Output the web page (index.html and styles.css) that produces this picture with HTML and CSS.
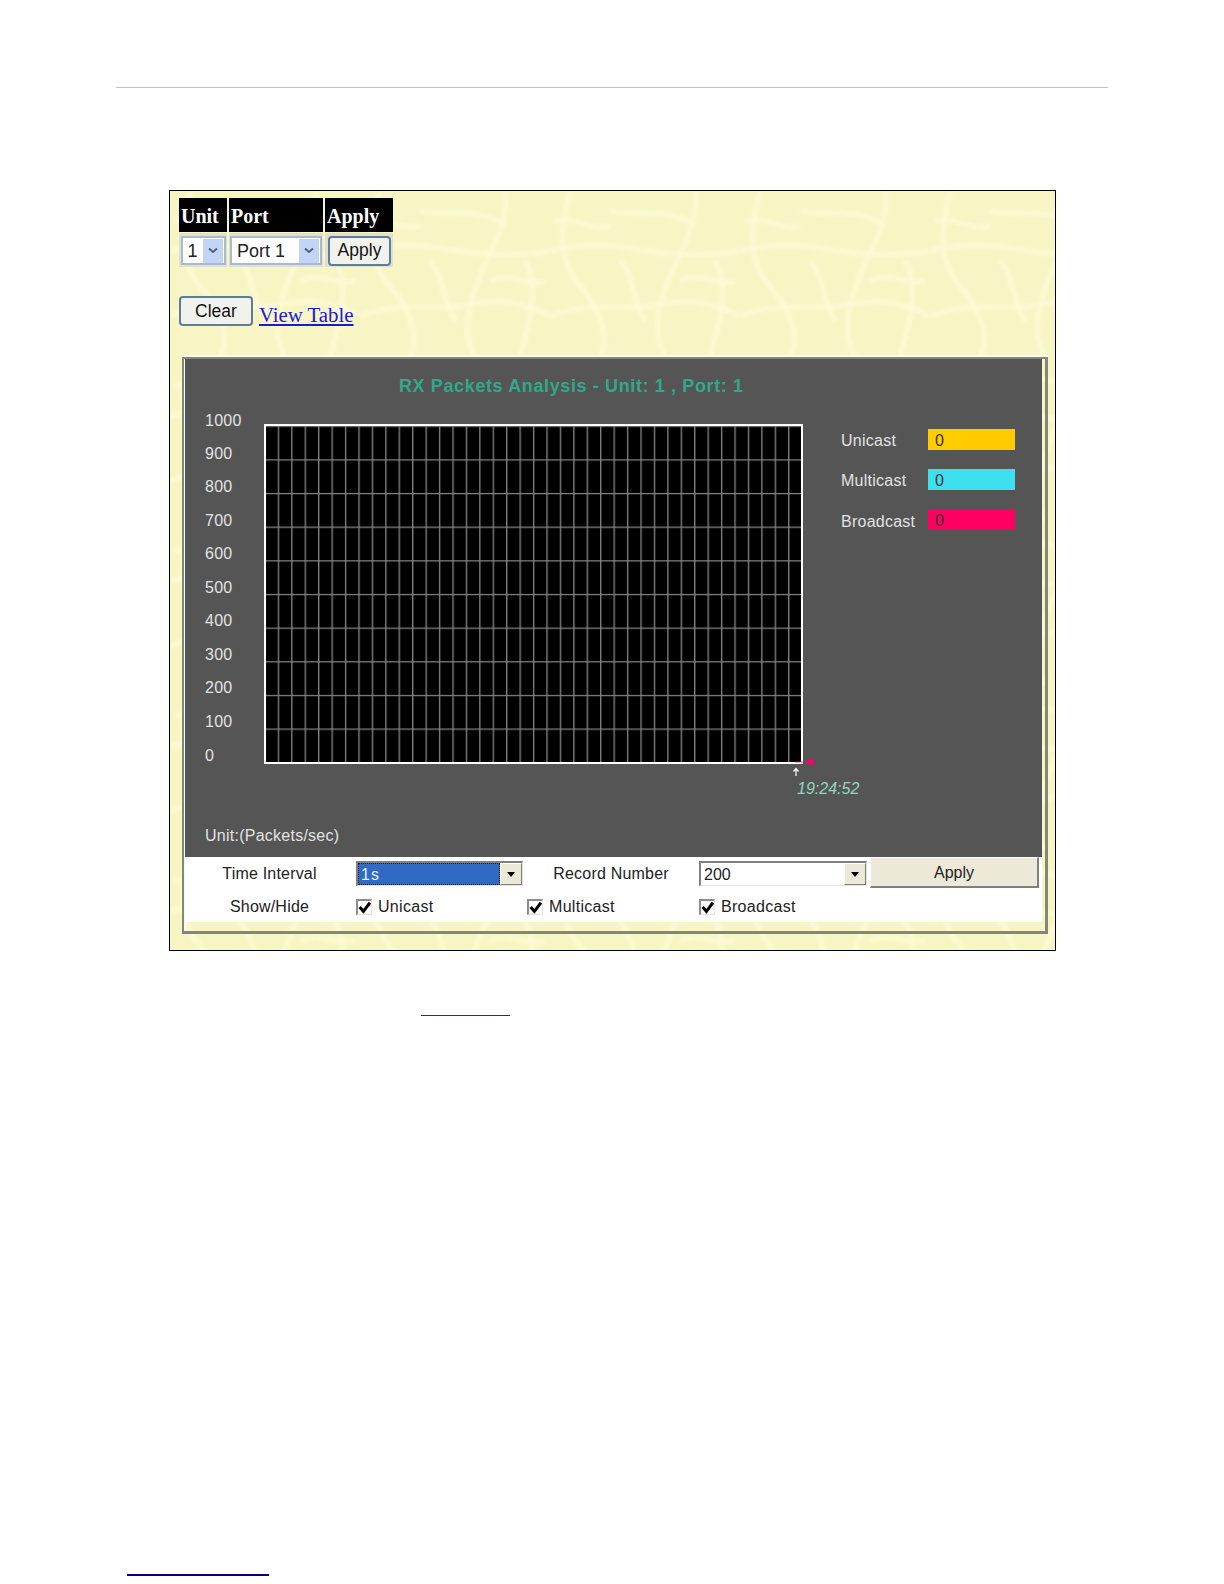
FILE: index.html
```html
<!DOCTYPE html>
<html lang="en">

<head>
    <meta charset="UTF-8">
    <title>RX Packets Analysis</title>
    <link rel="stylesheet" href="styles.css">
</head>

<body>
    <div class="rule"></div>

    <div class="frame">
        <div class="picker">
            <div class="picker__head">Unit</div>
            <div class="picker__head">Port</div>
            <div class="picker__head">Apply</div>
            <div class="picker__cell">
                <div class="pick pick--unit">
                    <span class="pick__value">1</span>
                    <span class="pick__arrow">
                        <svg width="10" height="7" viewBox="0 0 10 7"><path d="M1 1.5 L5 5 L9 1.5" fill="none" stroke="#4d5f85" stroke-width="2"/></svg>
                    </span>
                </div>
            </div>
            <div class="picker__cell">
                <div class="pick pick--port">
                    <span class="pick__value">Port 1</span>
                    <span class="pick__arrow">
                        <svg width="10" height="7" viewBox="0 0 10 7"><path d="M1 1.5 L5 5 L9 1.5" fill="none" stroke="#4d5f85" stroke-width="2"/></svg>
                    </span>
                </div>
            </div>
            <div class="picker__cell picker__cell--btn">
                <button class="btn btn--apply" type="button">Apply</button>
            </div>
        </div>

        <div class="actions">
            <button class="btn btn--clear" type="button">Clear</button>
            <a class="view-link" href="#">View Table</a>
        </div>

        <div class="panel">
            <svg class="chart" width="857" height="498" viewBox="185 359 857 498">
                <defs>
                    <pattern id="grid" patternUnits="userSpaceOnUse" x="264.3" y="459.3" width="13.43" height="33.65">
                        <path d="M0 0.7 H13.43 M0.7 0 V33.65" fill="none" stroke="#858585" stroke-width="1.3"/>
                    </pattern>
                </defs>

                <text class="chart__title" x="399" y="392" textLength="344">RX Packets Analysis - Unit: 1 , Port: 1</text>

                <text class="chart__label" x="205" y="426">1000</text>
                <text class="chart__label" x="205" y="459">900</text>
                <text class="chart__label" x="205" y="492">800</text>
                <text class="chart__label" x="205" y="526">700</text>
                <text class="chart__label" x="205" y="559">600</text>
                <text class="chart__label" x="205" y="593">500</text>
                <text class="chart__label" x="205" y="626">400</text>
                <text class="chart__label" x="205" y="660">300</text>
                <text class="chart__label" x="205" y="693">200</text>
                <text class="chart__label" x="205" y="727">100</text>
                <text class="chart__label" x="205" y="761">0</text>

                <rect x="265" y="425" width="537" height="338" fill="#000"/>
                <rect x="265" y="425" width="537" height="338" fill="url(#grid)"/>
                <rect x="265" y="425" width="537" height="338" fill="none" stroke="#fff" stroke-width="2"/>

                <path d="M795 762 H804" stroke="#ff0066" stroke-width="1" stroke-opacity="0.7"/>
                <path d="M803 762 L814 758.5 V765.5 Z" fill="#ff0066"/>
                <path d="M796 776 V769 M793.5 771.5 L796 768.5 L798.5 771.5" fill="none" stroke="#fff" stroke-width="1.2"/>
                <text class="chart__time" x="797" y="794">19:24:52</text>

                <text class="chart__label" x="841" y="446">Unicast</text>
                <rect x="928" y="429" width="87" height="21" fill="#ffcc00"/>
                <text class="chart__count" x="935" y="446">0</text>

                <text class="chart__label" x="841" y="486">Multicast</text>
                <rect x="928" y="469" width="87" height="21" fill="#3ce0ee"/>
                <text class="chart__count" x="935" y="486">0</text>

                <text class="chart__label" x="841" y="527">Broadcast</text>
                <rect x="928" y="509" width="87" height="20" fill="#ff0060"/>
                <text class="chart__count" x="935" y="526">0</text>

                <text class="chart__label" x="205" y="841">Unit:(Packets/sec)</text>
            </svg>

            <div class="controls">
                <div class="controls__row controls__row--top">
                    <div class="controls__label">Time Interval</div>
                    <div class="drop drop--time">
                        <span class="drop__value drop__value--picked">1s</span>
                        <span class="drop__arrow"></span>
                    </div>
                    <div class="controls__label controls__label--mid">Record Number</div>
                    <div class="drop drop--record">
                        <span class="drop__value">200</span>
                        <span class="drop__arrow"></span>
                    </div>
                    <button class="flat-btn" type="button">Apply</button>
                </div>
                <div class="controls__row controls__row--checks">
                    <div class="controls__label">Show/Hide</div>
                    <div class="check check--first">
                        <span class="check__box"><svg width="13" height="13" viewBox="0 0 12 12"><path d="M1.5 5.5 L5 9.5 L11 1.5" fill="none" stroke="#000" stroke-width="2.8"/></svg></span>
                        Unicast
                    </div>
                    <div class="check check--second">
                        <span class="check__box"><svg width="13" height="13" viewBox="0 0 12 12"><path d="M1.5 5.5 L5 9.5 L11 1.5" fill="none" stroke="#000" stroke-width="2.8"/></svg></span>
                        Multicast
                    </div>
                    <div class="check">
                        <span class="check__box"><svg width="13" height="13" viewBox="0 0 12 12"><path d="M1.5 5.5 L5 9.5 L11 1.5" fill="none" stroke="#000" stroke-width="2.8"/></svg></span>
                        Broadcast
                    </div>
                </div>
            </div>
        </div>
    </div>

    <div class="blank-link blank-link--mid"></div>
    <div class="blank-link blank-link--foot"></div>
</body>

</html>
```

FILE: styles.css
```css
body {
    margin: 0;
    padding: 0;
    background-color: #fff;
    color: #000;
    font-family: "Liberation Sans", Arial, sans-serif;
}

.rule {
    height: 1px;
    width: 992px;
    margin: 87px 0 0 116px;
    background-color: #c4c4c4;
}

.frame {
    box-sizing: border-box;
    width: 887px;
    margin: 102px 0 0 169px;
    padding: 7px 9px 16px;
    border: 1px solid #000;
    background-color: #f7f5c4;
    background-image: url("data:image/svg+xml,%3Csvg xmlns='http://www.w3.org/2000/svg' width='190' height='165'%3E%3Cdefs%3E%3Cfilter id='b'%3E%3CfeGaussianBlur stdDeviation='1.6'/%3E%3C/filter%3E%3C/defs%3E%3Cg fill='none' stroke='%23fdfbd6' stroke-width='5' stroke-opacity='.75' filter='url(%23b)'%3E%3Cpath d='M20 0C10 40 8 70 30 95S60 150 50 165'/%3E%3Cpath d='M0 60C40 50 70 55 100 60S160 65 190 60'/%3E%3Cpath d='M145 0C150 30 130 60 120 85S100 140 115 165'/%3E%3Cpath d='M0 125C40 110 70 120 100 115S150 105 190 125'/%3E%3Cpath d='M60 20C80 25 120 15 145 35'/%3E%3Cpath d='M165 70C180 95 170 130 160 165'/%3E%3Cpath d='M70 70C85 85 80 105 95 130'/%3E%3Cpath d='M130 90C150 80 165 95 185 90'/%3E%3Cpath d='M5 30C25 25 40 40 60 35'/%3E%3C/g%3E%3C/svg%3E");
}

/* unit / port picker */
.picker {
    display: grid;
    grid-template-columns: 48px 94px 68px;
    grid-template-rows: 34px 34px;
    column-gap: 2px;
    row-gap: 1px;
    width: 214px;
}

.picker__head {
    display: flex;
    align-items: center;
    padding: 3px 0 0 2px;
    background-color: #000;
    color: #fff;
    font-family: "Liberation Serif", "Times New Roman", serif;
    font-size: 20px;
    font-weight: bold;
}

.picker__cell {
    display: flex;
    align-items: center;
    justify-content: center;
    padding-top: 1px;
    background-color: #dfe0d0;
}

.picker__cell--btn {
    justify-content: flex-start;
    padding-left: 3px;
}

.pick {
    box-sizing: border-box;
    display: flex;
    align-items: center;
    justify-content: space-between;
    height: 29px;
    padding: 0 1px 0 5px;
    border: 2px solid #a9bacb;
    background-color: #fff;
    font-size: 18px;
    color: #222;
}

.pick__value {
    margin-top: 2px;
}

.pick--unit {
    width: 45px;
}

.pick--port {
    width: 92px;
}

.pick__arrow {
    display: flex;
    align-items: center;
    justify-content: center;
    width: 20px;
    height: 24px;
    background-color: #c3d5f5;
}

.btn {
    box-sizing: border-box;
    height: 30px;
    padding: 0;
    border: 2px solid #5f7d99;
    border-radius: 4px;
    background-color: #f2f2ec;
    color: #111;
    font-family: "Liberation Sans", Arial, sans-serif;
    font-size: 17.5px;
}

.btn--apply {
    width: 63px;
}

.btn--clear {
    width: 74px;
}

.actions {
    display: flex;
    align-items: flex-start;
    height: 30px;
    margin-top: 29px;
}

.view-link {
    margin: 7px 0 0 6px;
    color: #1a1ad8;
    font-family: "Liberation Serif", "Times New Roman", serif;
    font-size: 20.8px;
}

/* chart panel */
.panel {
    width: 866px;
    box-sizing: border-box;
    margin: 31px 0 0 3px;
    padding: 0 3px 9px 1px;
    border: solid #85857a;
    border-width: 2px 3px 3px 2px;
    box-shadow: 0 -2px 0 #fdfcea, inset 3px 0 0 #fbfae0;
}

.chart {
    display: block;
    background-color: #555;
}

.chart__title {
    fill: #2fa98a;
    font-size: 18px;
    font-weight: bold;
}

.chart__label {
    fill: #e2e2e2;
    font-size: 16px;
    letter-spacing: 0.25px;
}

.chart__count {
    fill: #333;
    font-size: 16px;
}

.chart__time {
    fill: #8fd8c0;
    font-size: 16px;
    font-style: italic;
}

/* controls under the chart */
.controls {
    height: 65px;
    background-color: #fff;
    color: #222;
    font-size: 16px;
}

.controls__row {
    display: flex;
    align-items: center;
    height: 34px;
}

.controls__row--top {
    align-items: flex-start;
    height: 31px;
}

.controls__row--checks {
    margin-top: 2px;
}

.controls__label {
    width: 169px;
    padding-right: 2px;
    text-align: center;
    letter-spacing: 0.2px;
}

.controls__row--top .controls__label {
    margin-top: 8px;
}

.controls__label--mid {
    width: 176px;
    padding-right: 0;
}

.drop {
    box-sizing: border-box;
    display: flex;
    height: 25px;
    margin-top: 4px;
    border: solid;
    border-width: 2px 1px 1px 2px;
    border-color: #808080 #e4e4dc #e4e4dc #808080;
    background-color: #fff;
}

.drop--time {
    width: 167px;
}

.drop--record {
    width: 168px;
}

.drop__value {
    flex: 1;
    padding: 1px 0 0 3px;
    line-height: 22px;
}

.drop__value--picked {
    padding: 0 0 0 2px;
    border: 1px dotted #222;
    background-color: #316ac5;
    color: #e8f0ff;
    letter-spacing: 1px;
    line-height: 21px;
}

.drop__arrow {
    position: relative;
    box-sizing: border-box;
    width: 22px;
    border: 1px solid;
    border-color: #fff #808078 #808078 #fff;
    background-color: #ece9d8;
}

.drop__arrow::after {
    content: "";
    position: absolute;
    left: 6px;
    top: 8px;
    border-top: 5px solid #000;
    border-left: 4px solid transparent;
    border-right: 4px solid transparent;
}

.flat-btn {
    box-sizing: border-box;
    width: 169px;
    height: 31px;
    margin-left: 3px;
    padding: 1px 0 0;
    border: solid;
    border-width: 1px 2px 2px 1px;
    border-color: #fff #808078 #808078 #fff;
    background-color: #ece9d8;
    color: #222;
    font-family: "Liberation Sans", Arial, sans-serif;
    font-size: 16px;
}

.check {
    display: flex;
    align-items: center;
    gap: 6px;
    letter-spacing: 0.3px;
}

.check--first {
    width: 171px;
}

.check--second {
    width: 172px;
}

.check__box {
    box-sizing: border-box;
    display: flex;
    align-items: center;
    justify-content: center;
    width: 16px;
    height: 16px;
    border: solid;
    border-width: 2px 1px 1px 2px;
    border-color: #8c8c8c #e4e4dc #e4e4dc #8c8c8c;
    background-color: #fff;
}

/* link text was blanked out on the page, only the underlines are left */
.blank-link {
    height: 1px;
}

.blank-link--mid {
    width: 89px;
    margin: 64px 0 0 421px;
    background-color: #800080;
}

.blank-link--foot {
    width: 142px;
    height: 2px;
    margin: 558px 0 0 127px;
    background-color: #000080;
}
```
